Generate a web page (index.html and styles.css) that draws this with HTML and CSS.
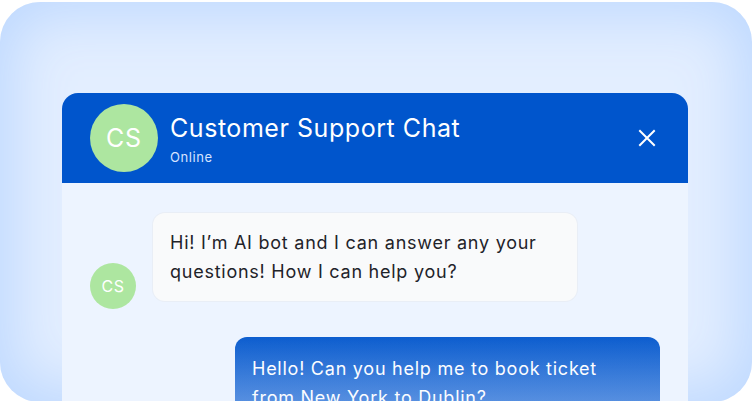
FILE: index.html
```html
<!DOCTYPE html>
<html lang="en">
<head>
<meta charset="utf-8">
<title>Customer Support Chat</title>
<link rel="stylesheet" href="styles.css">
</head>
<body>
<div class="frame">
  <div class="card">
    <header class="card-header">
      <div class="avatar avatar-lg">CS</div>
      <div class="header-text">
        <div class="title">Customer Support Chat</div>
        <div class="status">Online</div>
      </div>
      <button class="close" aria-label="Close">
        <svg width="18" height="18" viewBox="0 0 18 18" fill="none" stroke="#fff" stroke-width="2" stroke-linecap="square">
          <path d="M2 2L16 16M16 2L2 16"/>
        </svg>
      </button>
    </header>
    <div class="card-body">
      <div class="row row-bot">
        <div class="avatar avatar-sm">CS</div>
        <div class="bubble bubble-bot">Hi! I’m AI bot and I can answer any your questions! How I can help you?</div>
      </div>
      <div class="row row-user">
        <div class="bubble bubble-user">Hello! Can you help me to book ticket from New York to Dublin?</div>
      </div>
    </div>
    <div class="fade"></div>
  </div>
</div>
</body>
</html>
```
FILE: styles.css
```css
* { box-sizing: border-box; }
html, body { margin: 0; padding: 0; background: #fff; }
body {
  font-family: "Inter", "Liberation Sans", sans-serif;
  width: 752px;
  height: 401px;
  overflow: hidden;
}
.frame {
  margin-top: 2px;
  width: 752px;
  height: 400px;
  border-radius: 40px;
  overflow: hidden;
  background: #e3eeff;
  box-shadow: inset 0 0 60px 12px #bdd8ff;
  padding: 91px 64px 0 62px;
}
.card {
  position: relative;
  width: 626px;
  height: 320px;
  border-radius: 16px 16px 0 0;
  overflow: hidden;
  background: #edf4ff;
}
.card-header {
  height: 90px;
  background: #0055cc;
  display: flex;
  align-items: center;
  padding: 0 32px 0 28px;
}
.avatar {
  border-radius: 50%;
  background: #ade6a0;
  color: #fff;
  display: flex;
  align-items: center;
  justify-content: center;
  flex: none;
}
.avatar-lg {
  width: 68px;
  height: 68px;
  font-size: 25px;
  letter-spacing: 0.8px;
}
.avatar-sm {
  width: 46px;
  height: 46px;
  font-size: 16px;
  letter-spacing: 0.6px;
  margin-bottom: -8px;
}
.header-text {
  margin-left: 12px;
  flex: 1;
  color: #fff;
  padding-top: 3px;
}
.title {
  font-size: 25px;
  line-height: 30px;
  letter-spacing: 0.55px;
}
.status {
  font-size: 13px;
  line-height: 18px;
  margin-top: 5px;
  letter-spacing: 0.6px;
  color: #d6e3ff;
}
.close {
  background: none;
  border: 0;
  padding: 0;
  width: 18px;
  height: 18px;
  display: flex;
}
.card-body {
  padding: 30px 28px 0 28px;
  display: flex;
  flex-direction: column;
  gap: 36px;
}
.row {
  display: flex;
  align-items: flex-end;
}
.row-bot { gap: 17px; }
.row-user { justify-content: flex-end; }
.bubble {
  font-size: 18px;
  line-height: 29px;
  letter-spacing: 0.75px;
  padding: 15px 17px;
  border-radius: 12px;
}
.bubble-bot {
  width: 424px;
  background: #f9fafb;
  color: #1f2329;
  box-shadow: 0 0 0 1px #e9eef6;
}
.bubble-user {
  width: 425px;
  height: 100px;
  padding-top: 17px;
  background: linear-gradient(180deg, #0055cc 0%, #1f6ad6 100%);
  color: #fff;
}
.fade {
  position: absolute;
  left: 0;
  right: 0;
  bottom: 0;
  height: 90px;
  background: linear-gradient(180deg, rgba(237,244,255,0) 0%, rgba(237,244,255,0.35) 100%);
  pointer-events: none;
}
```
